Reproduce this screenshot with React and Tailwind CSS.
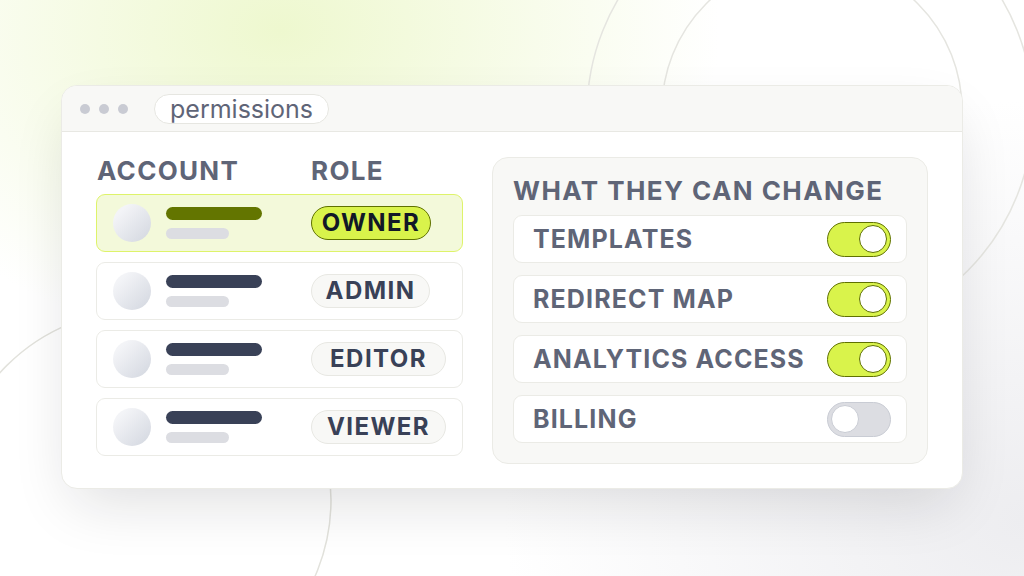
import React from 'react';

const roles = [
  { name: 'OWNER', width: 'w-[120px]', active: true },
  { name: 'ADMIN', width: 'w-[119px]' },
  { name: 'EDITOR', width: 'w-[135px]' },
  { name: 'VIEWER', width: 'w-[135px]' },
];

const perms = [
  { label: 'TEMPLATES', on: true },
  { label: 'REDIRECT MAP', on: true },
  { label: 'ANALYTICS ACCESS', on: true },
  { label: 'BILLING', on: false },
];

function Toggle({ on }) {
  return on ? (
    <div className="flex h-[35px] w-[64px] items-center justify-end rounded-full border-[1.5px] border-[#5f7100] bg-[#d9f34b] pr-[3px]">
      <div className="h-[28px] w-[28px] rounded-full border-[1.5px] border-[#5f7100] bg-white" />
    </div>
  ) : (
    <div className="flex h-[35px] w-[64px] items-center justify-start rounded-full border-[1.5px] border-[#c9ccd4] bg-[#dcdde2] pl-[3px]">
      <div className="h-[28px] w-[28px] rounded-full border-[1.5px] border-[#c9ccd4] bg-white" />
    </div>
  );
}

function AccountRow({ role }) {
  const active = role.active;
  return (
    <div
      className={`flex h-[58px] items-center rounded-[9px] pl-[16px] ${
        active ? 'border-[1.5px] border-[#def36a] bg-[#f3f9da]' : 'border border-[#ebebe6] bg-white'
      }`}
    >
      <div className="h-[38px] w-[38px] rounded-full bg-[linear-gradient(135deg,#f3f4f7_20%,#d2d6df_100%)]" />
      <div className="ml-[15px] flex w-[145px] flex-col gap-[8px]">
        <div className={`h-[13px] w-[96px] rounded-full ${active ? 'bg-[#637500]' : 'bg-[#394157]'}`} />
        <div className="h-[11px] w-[63px] rounded-full bg-[#dcdde2]" />
      </div>
      <div
        className={`flex h-[34px] items-center justify-center rounded-full text-[24px] font-bold tracking-[0.06em] ${role.width} ${
          active
            ? 'border-[1.5px] border-[#5f7100] bg-[#d9f34b] text-[#111827]'
            : 'border border-[#e8e8e3] bg-[#f8f8f6] text-[#394157]'
        }`}
      >
        {role.name}
      </div>
    </div>
  );
}

export default function App() {
  return (
    <div
      className="relative h-[576px] w-[1024px] overflow-hidden bg-white bg-[radial-gradient(ellipse_440px_320px_at_280px_30px,#eef8cf_0%,rgba(255,255,255,0)_100%),radial-gradient(ellipse_520px_420px_at_1024px_520px,#ededf0_0%,rgba(255,255,255,0)_100%)]"
      style={{ fontFamily: 'Inter, "Noto Sans", sans-serif' }}
    >
      {/* background arcs */}
      <svg className="absolute inset-0" width="1024" height="576" viewBox="0 0 1024 576" fill="none">
        <circle cx="810" cy="113" r="223" stroke="#e5e5e0" strokeWidth="1.5" />
        <circle cx="812" cy="110" r="150" stroke="#e5e5e0" strokeWidth="1.5" />
        <circle cx="141" cy="500" r="190" stroke="#e2e2dc" strokeWidth="1.5" />
      </svg>

      <div className="relative pl-[61px] pt-[85px]">
        <div className="w-[902px] overflow-hidden rounded-[16px] border border-[#ebebe6] bg-white shadow-[0_24px_60px_-12px_rgba(20,20,30,0.14)]">
          {/* title bar */}
          <div className="flex h-[46px] items-center border-b border-[#e8e8e3] bg-[#f8f8f6] pl-[18px]">
            <div className="flex gap-[9px]">
              <span className="h-[10px] w-[10px] rounded-full bg-[#c9cbd3]" />
              <span className="h-[10px] w-[10px] rounded-full bg-[#c9cbd3]" />
              <span className="h-[10px] w-[10px] rounded-full bg-[#c9cbd3]" />
            </div>
            <div className="ml-[26px] flex h-[30px] items-center rounded-full border border-[#e6e6e1] bg-white px-[15px] text-[25px] leading-[30px] text-[#5f6577]">
              permissions
            </div>
          </div>

          {/* body */}
          <div className="flex gap-[29px] pb-[24px] pl-[34px] pr-[34px] pt-[25px]">
            <div className="w-[367px]">
              <div className="mb-[9px] flex h-[28px] items-center text-[26px] font-bold leading-[28px] tracking-[0.05em] text-[#5f6577]">
                <span className="w-[215px] pl-[1px]">ACCOUNT</span>
                <span>ROLE</span>
              </div>
              <div className="flex flex-col gap-[10px]">
                {roles.map((r) => (
                  <AccountRow key={r.name} role={r} />
                ))}
              </div>
            </div>

            <div className="w-[436px] rounded-[16px] border border-[#ebebe6] bg-[#f8f8f6] px-[20px] pb-[20px] pt-[19px]">
              <div className="mb-[10px] h-[28px] text-[26px] font-bold leading-[28px] tracking-[0.055em] text-[#5f6577]">
                WHAT THEY CAN CHANGE
              </div>
              <div className="flex flex-col gap-[12px]">
                {perms.map((p) => (
                  <div
                    key={p.label}
                    className="flex h-[48px] items-center justify-between rounded-[9px] border border-[#ebebe6] bg-white pl-[19px] pr-[15px]"
                  >
                    <span className="pt-[2px] text-[25px] font-bold tracking-[0.045em] text-[#5f6577]">{p.label}</span>
                    <Toggle on={p.on} />
                  </div>
                ))}
              </div>
            </div>
          </div>
        </div>
      </div>
    </div>
  );
}
